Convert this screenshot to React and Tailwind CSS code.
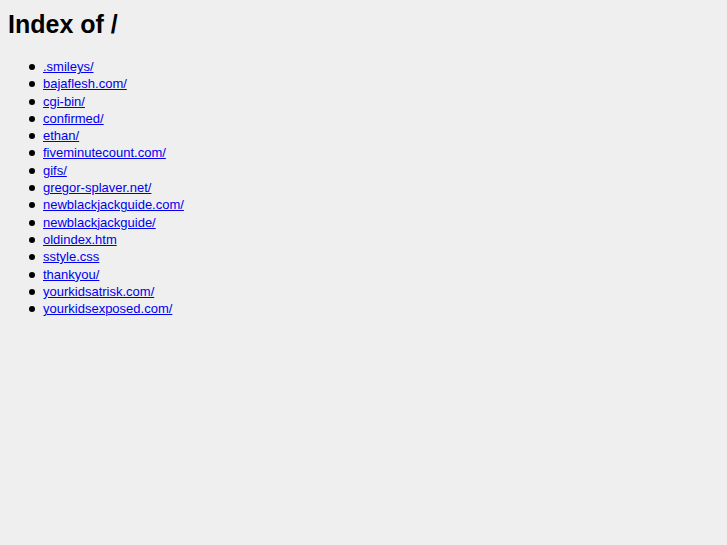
const entries = [
  ".smileys/",
  "bajaflesh.com/",
  "cgi-bin/",
  "confirmed/",
  "ethan/",
  "fiveminutecount.com/",
  "gifs/",
  "gregor-splaver.net/",
  "newblackjackguide.com/",
  "newblackjackguide/",
  "oldindex.htm",
  "sstyle.css",
  "thankyou/",
  "yourkidsatrisk.com/",
  "yourkidsexposed.com/",
];

export default function App() {
  return (
    <div className="min-h-[545px] bg-[#efefef] px-2 pt-[9px] text-black [font-family:'Liberation_Sans',Arial,sans-serif]">
      <h1 className="text-[25px] font-bold leading-[30px]">Index of /</h1>
      <ul className="mt-[19px] list-none pl-[35px] text-[13px] leading-[17.3px]">
        {entries.map((name) => (
          <li
            key={name}
            className="relative before:absolute before:left-[-14px] before:top-[6px] before:size-[6px] before:rounded-full before:bg-black before:content-['']"
          >
            <a href={name} className="text-[#0000ee] underline">
              {name}
            </a>
          </li>
        ))}
      </ul>
    </div>
  );
}
